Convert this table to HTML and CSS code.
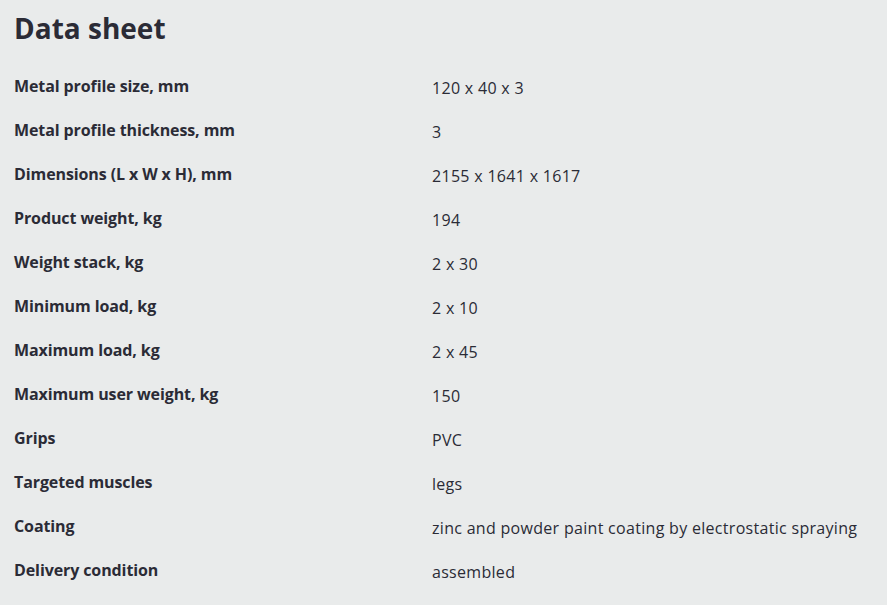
FILE: index.html
```html
<!DOCTYPE html>
<html>
<head>
<meta charset="utf-8">
<link rel="stylesheet" href="styles.css">
</head>
<body>
<section class="sheet">
  <h1 class="title">Data sheet</h1>
  <dl class="specs">
    <dt>Metal profile size, mm</dt><dd>120 x 40 x 3</dd>
    <dt>Metal profile thickness, mm</dt><dd>3</dd>
    <dt>Dimensions (L x W x H), mm</dt><dd>2155 x 1641 x 1617</dd>
    <dt>Product weight, kg</dt><dd>194</dd>
    <dt>Weight stack, kg</dt><dd>2 x 30</dd>
    <dt>Minimum load, kg</dt><dd>2 x 10</dd>
    <dt>Maximum load, kg</dt><dd>2 x 45</dd>
    <dt>Maximum user weight, kg</dt><dd>150</dd>
    <dt>Grips</dt><dd>PVC</dd>
    <dt>Targeted muscles</dt><dd>legs</dd>
    <dt>Coating</dt><dd>zinc and powder paint coating by electrostatic spraying</dd>
    <dt>Delivery condition</dt><dd>assembled</dd>
  </dl>
</section>
</body>
</html>
```
FILE: styles.css
```css
html, body {
  margin: 0;
  padding: 0;
  background: #e9ebeb;
}
body {
  font-family: "Open Sans", Lato, sans-serif;
  color: #2b2b36;
}
.sheet {
  padding: 11px 14px 0 14px;
}
.title {
  margin: 0;
  font-size: 28px;
  line-height: 34px;
  font-weight: 700;
}
.specs {
  margin: 19px 0 0 0;
  display: grid;
  grid-template-columns: 418px 1fr;
  grid-auto-rows: 44px;
  align-items: center;
}
.specs dt {
  font-weight: 700;
  font-size: 16px;
  line-height: 20px;
  letter-spacing: -0.1px;
}
.specs dd {
  margin: 0;
  font-size: 16px;
  line-height: 20px;
  padding-top: 3px;
  letter-spacing: 0.3px;
}
```
